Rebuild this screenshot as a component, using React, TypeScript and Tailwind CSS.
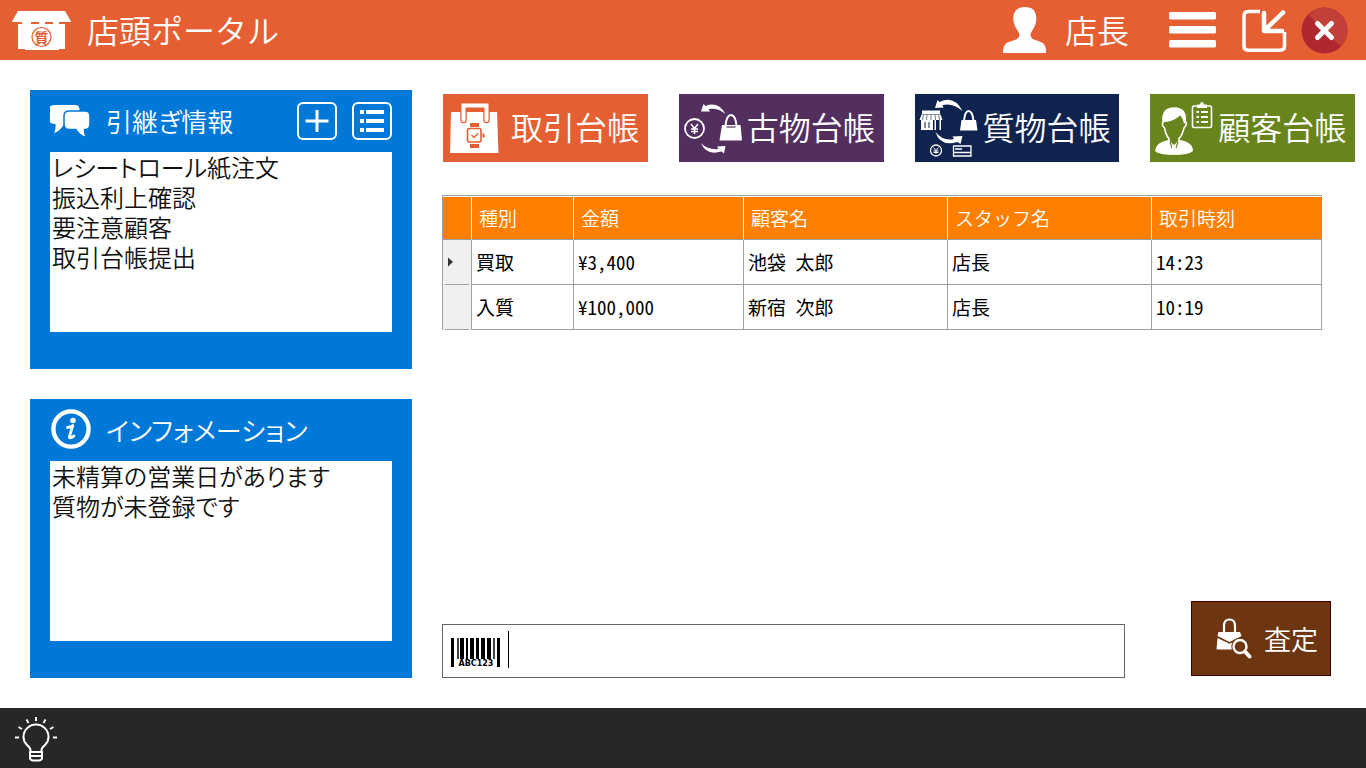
import type { ReactNode } from "react";

function StoreIcon() {
  return (
    <svg width="60" height="40" viewBox="0 0 60 40" aria-hidden="true">
      <path d="M6 1H53L59 11.5V12H53V39H47V40H13V39H6V12H0V11.5Z" fill="#fff" />
      <path d="M6 12h4v2H6zM19 12h8v2h-8zM33 12h8v2h-8zM47 12h6v2h-6z" fill="#e65f32" />
      <circle cx="29.5" cy="27" r="9.5" fill="none" stroke="#e65f32" strokeWidth="1.2" />
      <text x="29.5" y="32.500" textAnchor="middle" fontSize="14" fontWeight="700" fill="#e65f32">質</text>
    </svg>
  );
}

function UserIcon() {
  return (
    <svg width="44" height="46" viewBox="0 0 44 46" aria-hidden="true">
      <path
        d="M22 0C29.5 0 33.500 4 33.300 12C33.100 18 30.500 21.500 28.200 25.500C26.800 28 27.500 31 31 32.500C36 34.500 40.500 35 42 39C43 42 43 43.500 43 46H0C0 43.500 0 42 1.200 39C2.800 35 8 34.500 13 32.500C16.500 31 17 28 15.700 25.500C13.500 21.500 10.500 18 10.300 12C10 4 14.500 0 22 0Z"
        fill="#fff"
      />
    </svg>
  );
}

function MenuIcon() {
  return (
    <svg width="47" height="36" viewBox="0 0 47 36" fill="#fff" aria-hidden="true">
      <rect width="47" height="7.500" rx="1.500" />
      <rect y="14" width="47" height="7.500" rx="1.500" />
      <rect y="28" width="47" height="7.500" rx="1.500" />
    </svg>
  );
}

function MinimizeIcon() {
  return (
    <svg width="46" height="44" viewBox="0 0 46 44" fill="none" stroke="#fff" aria-hidden="true">
      <path d="M18 3.500H6.500Q2 3.500 2 8V38Q2 42.200 6.500 42.200H38Q42.500 42.200 42.500 38V24" strokeWidth="3.500" />
      <path d="M22 5V23H40M23 22L41 4.500" strokeWidth="4.500" strokeLinecap="round" strokeLinejoin="round" />
    </svg>
  );
}

function CloseIcon() {
  return (
    <svg width="47" height="47" viewBox="0 0 47 47" aria-hidden="true">
      <circle cx="23.500" cy="23.500" r="23" fill="#b0272f" />
      <path d="M7.200 7.200A23 23 0 0 1 39.800 39.800Z" fill="#c24037" />
      <path d="M16.500 16.500L30.500 30.500M30.500 16.500L16.500 30.500" stroke="#fff" strokeWidth="5" strokeLinecap="round" />
    </svg>
  );
}

function ChatIcon() {
  return (
    <svg width="42" height="34" viewBox="1 0 42 34" fill="#fff" aria-hidden="true">
      <path d="M5 1H26Q30.500 1 30.500 5.500V15Q30.500 20 26 20H15Q11.500 27 5 29Q7 25 6.500 20Q0 20 0 15V6Q0 1 5 1Z" />
      <path
        d="M20 7H36Q41 7 41 12V20Q41 25.500 36 25.500H35.500Q35.500 30 37.500 33.500Q30 31.500 27 25.500H20Q15 25.500 15 20V12Q15 7 20 7Z"
        stroke="#0078d7"
        strokeWidth="1.500"
      />
    </svg>
  );
}

function InfoIcon() {
  return (
    <svg width="42" height="42" viewBox="0 0 42 42" fill="none" aria-hidden="true">
      <circle cx="21" cy="20" r="17.600" stroke="#fff" strokeWidth="4.400" />
      <circle cx="23" cy="11.500" r="2.800" fill="#fff" />
      <path d="M17.500 18.500Q21 18 22.700 16.500L19.500 27.500Q18.800 30.500 24 27" stroke="#fff" strokeWidth="2.800" strokeLinejoin="round" strokeLinecap="round" />
    </svg>
  );
}

function PlusIcon() {
  return (
    <svg width="24" height="24" viewBox="0 0 24 24" stroke="#fff" strokeWidth="3" aria-hidden="true">
      <path d="M12 1V23M0.500 12H23.500" />
    </svg>
  );
}

function ListIcon() {
  return (
    <svg width="26" height="24" viewBox="0 0 26 24" fill="#fff" aria-hidden="true">
      <path d="M1 1h4v4H1zM7 1h18v4H7zM1 10h4v4H1zM7 10h18v4H7zM1 19h4v4H1zM7 19h18v4H7z" />
    </svg>
  );
}

function ShoppingBagIcon() {
  return (
    <svg width="68" height="68" viewBox="0 0 68 68" fill="none" aria-hidden="true">
      <path d="M8 18H54L55.500 59H7Z" fill="#fff" />
      <path d="M20.500 26V11.500H43.500V26" stroke="#e65f32" strokeWidth="6.500" strokeLinecap="round" />
      <path d="M20.500 26V11.500H43.500V26" stroke="#fff" strokeWidth="4" strokeLinecap="round" />
      <path d="M24 19h16v5H24z" fill="#fff" />
      <rect x="24.500" y="34.500" width="13.500" height="13.500" rx="1.500" stroke="#e65f32" strokeWidth="1.600" />
      <path d="M27 29h9v4h-9zM27 50h9v4h-9zM39.500 39.500h2v4h-2z" fill="#e65f32" />
      <path d="M28.500 41l2.500 2.500 4-4" stroke="#e65f32" strokeWidth="1.300" />
    </svg>
  );
}

function UsedGoodsIcon() {
  return (
    <svg width="68" height="68" viewBox="0 0 68 68" fill="none" aria-hidden="true">
      <circle cx="15.500" cy="34.500" r="9.500" stroke="#fff" strokeWidth="1.800" />
      <path d="M12 30l3.500 4.500L19 30M15.500 34.500V40M12 35h7M12 37.500h7" stroke="#fff" strokeWidth="1.500" />
      <path d="M22 17.500L24.500 10L26.500 12Q39 7 46.500 20Q39 13.500 29.500 15L31 17.500Z" fill="#fff" />
      <path d="M22 49Q28 56 39.500 55L38 52.500L46.500 52L45 59.500L42.500 57.500Q27 62 22 49Z" fill="#fff" />
      <path d="M43 31H61.500L63 46.500H40.500Z" fill="#fff" />
      <path d="M46.500 32Q47.500 21 52 21Q56.500 21 57.500 32" stroke="#fff" strokeWidth="2" />
      <path d="M47.500 33h9" stroke="#532f60" strokeWidth="1.200" />
    </svg>
  );
}

function PawnIcon() {
  return (
    <svg width="68" height="68" viewBox="0 0 68 68" fill="none" aria-hidden="true">
      <path d="M7 16.500H25V20H7zM6.500 20.500H25.500L27.500 26H4.500Z" fill="#fff" />
      <path d="M8.500 21l-1 5M12 21l-0.500 5M16 21v5M20 21l0.500 5M23.500 21l1 5" stroke="#10234f" strokeWidth="0.600" />
      <path d="M6 26H18V36H6zM19.500 26h1.500v10h-1.500zM24.500 26h1.500v10h-1.500z" fill="#fff" />
      <path d="M10 28v6M14 28v6" stroke="#10234f" strokeWidth="1" />
      <path d="M20 14L22.500 6L24.500 8Q39 1 47.500 17Q38 8.500 27.500 11L28.500 13.500Z" fill="#fff" />
      <path d="M20.500 38Q28 47.500 39 45L37.500 42.500L47.500 42L45.500 50L42.500 48Q25 53 20.500 38Z" fill="#fff" />
      <path d="M46.500 26H61L62.500 36.500H45Z" fill="#fff" />
      <path d="M49 27Q50 17 53.500 17Q57.500 17 58.500 27" stroke="#fff" strokeWidth="2" />
      <circle cx="21" cy="56.500" r="5.500" stroke="#fff" strokeWidth="1.300" />
      <path d="M18.500 53.500l2.500 3 2.500-3M21 56.500V60M18.500 57h5M18.500 58.500h5" stroke="#fff" strokeWidth="1" />
      <path d="M38.500 52H56V62H38.500zM38 58.500h18M40 55h7" stroke="#fff" strokeWidth="1.300" />
    </svg>
  );
}

function CustomerIcon() {
  return (
    <svg width="68" height="68" viewBox="0 0 68 68" fill="none" aria-hidden="true">
      <path d="M13.500 27Q12 14 24 14Q36.500 14 35 27Q38 30 34 34Q32 42 29 44.500V48M13.500 27Q11 31 14.500 34Q16 42 19 44.500V48" stroke="#fff" strokeWidth="1.600" />
      <path d="M12.500 28Q11 14 24 14Q37 14 35.500 28L34 30Q33 24 30 21.500Q23 28 15 28Z" fill="#fff" />
      <path d="M18.500 46L24 51L29.500 46Q43 48 43 57Q39 61 24 61Q9 61 5 57Q6 48 18.500 46Z" fill="#fff" />
      <path d="M20 48l4 11 4-11" stroke="#68841c" strokeWidth="1.200" />
      <path d="M22.500 51h3l1 7-2.500 2-2.500-2z" fill="#fff" />
      <rect x="42.500" y="12" width="19" height="21.500" rx="1.500" stroke="#fff" strokeWidth="1.600" />
      <path d="M47 14V10.500H50Q50 8 52 8Q54 8 54 10.500H57V14Z" fill="#fff" />
      <path d="M46.500 18h2.500M51 18h7M46.500 23h2.500M51 23h7M46.500 28h2.500M51 28h7" stroke="#fff" strokeWidth="1.800" />
    </svg>
  );
}

function BarcodeIcon() {
  return (
    <svg width="50" height="34" viewBox="0 -4 50 34" shapeRendering="crispEdges" aria-hidden="true">
      <path d="M0 0h3v29H0zM46 0h3v29h-3zM9 0h4v21H9zM15 0h2v21h-2zM19 0h4v21h-4zM25 0h3v21h-3zM30 0h4v21h-4zM36 0h4v21h-4z" />
      <path d="M6 0h2v21H6zM42 0h2v21h-2z" fill="#444" />
      <text x="25" y="28" textAnchor="middle" fontFamily="DejaVu Sans, sans-serif" fontSize="8" fontWeight="700">ABC123</text>
    </svg>
  );
}

function AppraisalIcon() {
  return (
    <svg width="36" height="42" viewBox="0 0 36 42" fill="none" aria-hidden="true">
      <path d="M8 15V8Q8 1.500 13.500 1.500Q19 1.500 19 8V15" stroke="#fff" strokeWidth="2.200" />
      <path d="M2.500 14H24L25.500 18L13.500 24L1.500 18ZM1.500 20L13.500 25.700L25.500 20V31.500H0.500Z" fill="#fff" />
      <circle cx="24" cy="28.500" r="6.500" fill="#6d3611" stroke="#6d3611" strokeWidth="4.500" />
      <circle cx="24" cy="28.500" r="6.500" stroke="#fff" strokeWidth="2.400" />
      <path d="M29 33.500L33.500 38.500" stroke="#fff" strokeWidth="3.800" strokeLinecap="round" />
    </svg>
  );
}

function BulbIcon() {
  return (
    <svg width="44" height="48" viewBox="0 0 44 48" fill="none" stroke="#fff" strokeWidth="2" aria-hidden="true">
      <path d="M16.500 38V36Q16.500 34 13 31Q9.500 27.500 9.500 23A12.500 12.500 0 0 1 34.500 23Q34.500 27.500 31 31Q27.500 34 27.500 36V38" />
      <path d="M16 38H28V44Q28 46 25 46.500H19Q16 46 16 44ZM16 42H28" />
      <path d="M22 3V7M12.500 5.500l2 3.500M31.500 5.500l-2 3.500M4.500 13l3.500 2M39.500 13l-3.500 2M1 23.500h4M39 23.500h4" />
    </svg>
  );
}

const tiles = [
  { label: "取引台帳", color: "bg-[#e65f32]", icon: <ShoppingBagIcon /> },
  { label: "古物台帳", color: "bg-[#532f60]", icon: <UsedGoodsIcon /> },
  { label: "質物台帳", color: "bg-[#10234f]", icon: <PawnIcon /> },
  { label: "顧客台帳", color: "bg-[#68841c]", icon: <CustomerIcon /> },
];

const columns = [
  { label: "種別", width: "w-[102px]" },
  { label: "金額", width: "w-[170px]" },
  { label: "顧客名", width: "w-[204px]" },
  { label: "スタッフ名", width: "w-[204px]" },
  { label: "取引時刻", width: "w-[170px]" },
];

const rows = [
  ["買取", "¥3,400", "池袋 太郎", "店長", "14:23"],
  ["入質", "¥100,000", "新宿 次郎", "店長", "10:19"],
];

interface PanelProps {
  title: string;
  icon: ReactNode;
  items: string[];
  actions?: ReactNode;
}

function Panel({ title, icon, items, actions }: PanelProps) {
  return (
    <section className="flex flex-1 flex-col bg-[#0078d7] px-5 pb-[37px]">
      <div className="flex h-[62px] items-center">
        <div className="flex w-14 items-center">{icon}</div>
        <h2 className="flex-1 text-[26px] leading-8 text-white [font-feature-settings:'palt']">{title}</h2>
        {actions}
      </div>
      <ul className="flex-1 bg-white px-0.5 text-2xl leading-[30px] text-[#111] [font-feature-settings:'palt']">
        {items.map((item) => (
          <li key={item}>{item}</li>
        ))}
      </ul>
    </section>
  );
}

const actionClass = "flex h-[38px] w-10 items-center justify-center rounded-md border-2 border-white";

export default function App() {
  return (
    <div className="flex min-h-screen flex-col bg-white font-['Noto_Sans_CJK_JP',sans-serif] font-[350]">
      <header className="flex h-[60px] items-center bg-[#e65f32] pr-[18px] pl-3 text-[32px] leading-10 text-white">
        <StoreIcon />
        <h1 className="ml-[15px] flex-1 pb-0.5">店頭ポータル</h1>
        <UserIcon />
        <span className="ml-[18px] pb-0.5">店長</span>
        <button type="button" aria-label="メニュー" className="ml-10">
          <MenuIcon />
        </button>
        <button type="button" aria-label="最小化" className="ml-[26px]">
          <MinimizeIcon />
        </button>
        <button type="button" aria-label="閉じる" className="ml-[13px]">
          <CloseIcon />
        </button>
      </header>

      <main className="flex flex-1 gap-[30px] py-[30px] pr-[11px] pl-[30px]">
        <aside className="flex w-[382px] shrink-0 flex-col gap-[30px]">
          <Panel
            title="引継ぎ情報"
            icon={<ChatIcon />}
            items={["レシートロール紙注文", "振込利上確認", "要注意顧客", "取引台帳提出"]}
            actions={
              <div className="flex gap-[15px]">
                <button type="button" aria-label="追加" className={actionClass}>
                  <PlusIcon />
                </button>
                <button type="button" aria-label="一覧" className={actionClass}>
                  <ListIcon />
                </button>
              </div>
            }
          />
          <Panel
            title="インフォメーション"
            icon={<InfoIcon />}
            items={["未精算の営業日があります", "質物が未登録です"]}
          />
        </aside>

        <div className="flex min-w-0 flex-1 flex-col pt-1">
          <nav className="grid grid-cols-4 gap-[31px] pl-px">
            {tiles.map((tile) => (
              <button
                key={tile.label}
                type="button"
                className={`flex h-[68px] items-center text-[32px] leading-10 whitespace-nowrap text-white ${tile.color}`}
              >
                <span className="shrink-0">{tile.icon}</span>
                <span className="pb-1">{tile.label}</span>
              </button>
            ))}
          </nav>

          <div className="mt-[33px] pr-[33px]">
            <table className="w-full table-fixed border-separate border-spacing-0 border-t border-l border-[#a0a0a0] text-left text-[19px] leading-6">
              <thead>
                <tr className="bg-[#ff8000] text-white">
                  <th aria-label="選択" className="h-[44px] w-[29px] border-t border-r border-b border-t-white border-r-white border-b-[#a0a0a0] p-0" />
                  {columns.map((column) => (
                    <th
                      key={column.label}
                      className={`border-t border-r border-b border-t-white border-r-white border-b-[#a0a0a0] px-[7px] font-[350] last:border-r-[#ff8000] ${column.width}`}
                    >
                      {column.label}
                    </th>
                  ))}
                </tr>
              </thead>
              <tbody>
                {rows.map((row, index) => (
                  <tr key={row[0]}>
                    <td className="border-r border-[#a0a0a0] bg-[#f0f0f0] p-0">
                      <div className="mx-0.5 flex h-[45px] items-center border-b border-[#a0a0a0] pl-[3px]">
                        {index === 0 && (
                          <svg width="6" height="10" viewBox="0 0 6 10" aria-hidden="true">
                            <path d="M0 0.500L5 5L0 9.500Z" fill="#333" />
                          </svg>
                        )}
                      </div>
                    </td>
                    {row.map((cell, cellIndex) => (
                      <td
                        key={cellIndex}
                        className="border-r border-b border-[#a0a0a0] px-1 font-normal text-black [font-feature-settings:'hwid']"
                      >
                        {cell}
                      </td>
                    ))}
                  </tr>
                ))}
              </tbody>
            </table>
          </div>

          <div className="mt-auto flex items-end gap-[66px] pr-6">
            <label className="flex h-[54px] min-w-0 flex-1 items-center border border-[#646464] pl-2">
              <BarcodeIcon />
              <span className="mb-1 ml-[7px] h-[37px] w-px bg-black" />
              <input type="text" aria-label="バーコード" className="h-full min-w-0 flex-1 px-1 text-2xl outline-none" />
            </label>
            <button
              type="button"
              className="mb-0.5 flex h-[75px] w-[140px] items-center gap-3 border border-[#3c0000] bg-[#6d3611] pl-6 text-[27px] leading-8 whitespace-nowrap text-white"
            >
              <AppraisalIcon />
              査定
            </button>
          </div>
        </div>
      </main>

      <footer className="flex h-[60px] items-center bg-[#272727] pl-[14px]">
        <button type="button" aria-label="ヒント">
          <BulbIcon />
        </button>
      </footer>
    </div>
  );
}
